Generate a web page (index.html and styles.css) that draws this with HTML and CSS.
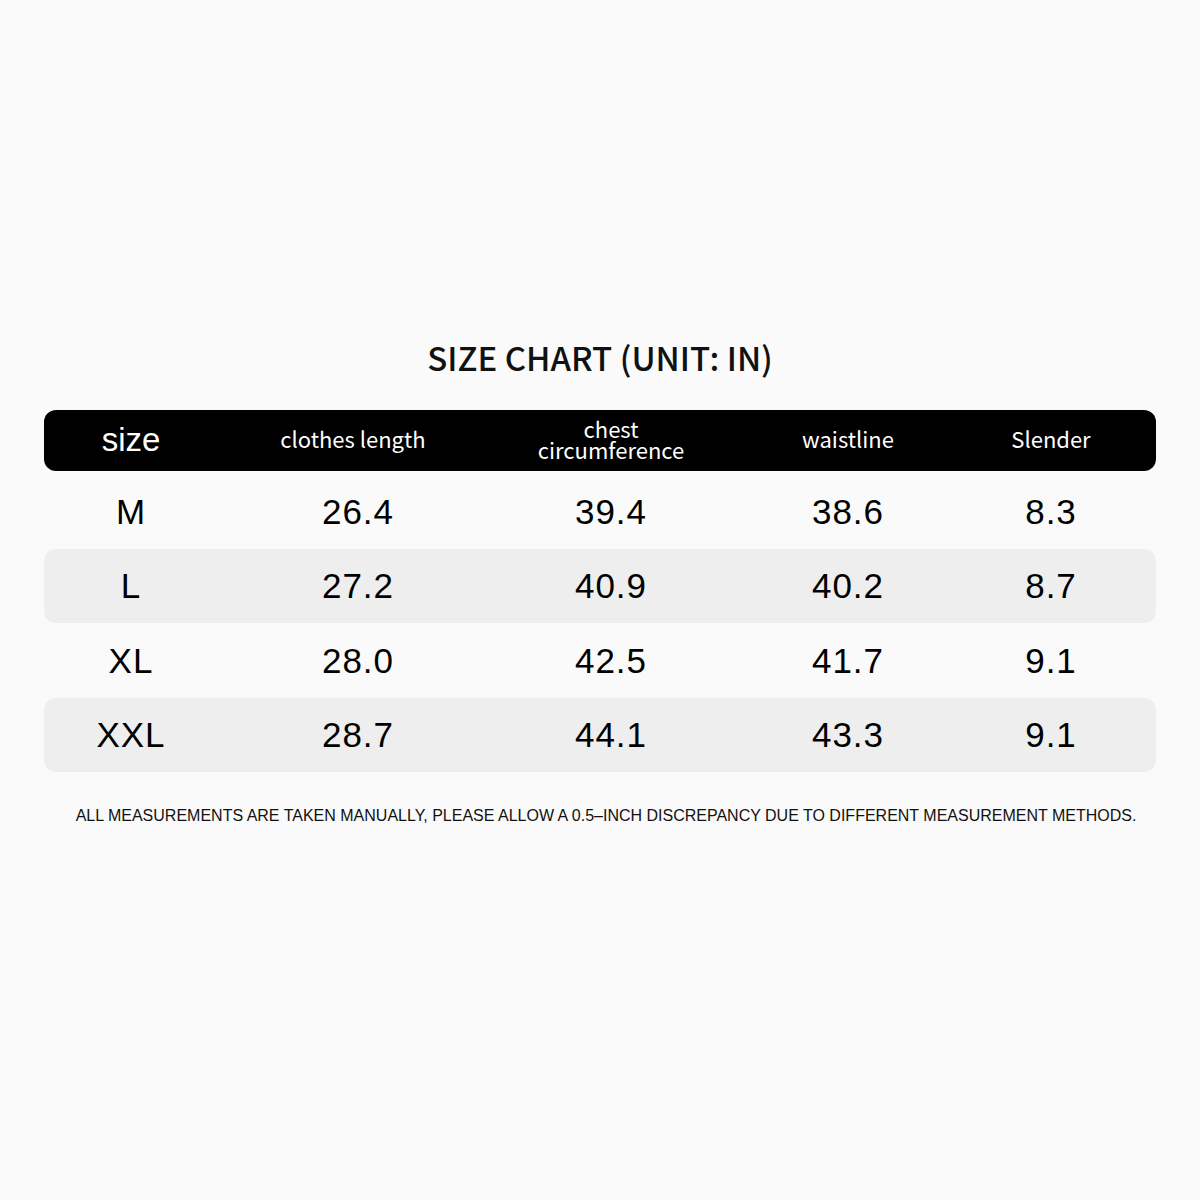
FILE: index.html
```html
<!DOCTYPE html>
<html>
<head>
<meta charset="utf-8">
<link rel="stylesheet" href="styles.css">
</head>
<body>
<main class="page">
  <h1 class="title">SIZE CHART (UNIT: IN)</h1>
  <div class="chart">
    <div class="row head">
      <div class="cell size-h">size</div>
      <div class="cell">clothes length</div>
      <div class="cell">chest<br>circumference</div>
      <div class="cell">waistline</div>
      <div class="cell">Slender</div>
    </div>
    <div class="row">
      <div class="cell">M</div><div class="cell v2">26.4</div><div class="cell">39.4</div><div class="cell">38.6</div><div class="cell">8.3</div>
    </div>
    <div class="row alt">
      <div class="cell">L</div><div class="cell v2">27.2</div><div class="cell">40.9</div><div class="cell">40.2</div><div class="cell">8.7</div>
    </div>
    <div class="row">
      <div class="cell">XL</div><div class="cell v2">28.0</div><div class="cell">42.5</div><div class="cell">41.7</div><div class="cell">9.1</div>
    </div>
    <div class="row alt">
      <div class="cell">XXL</div><div class="cell v2">28.7</div><div class="cell">44.1</div><div class="cell">43.3</div><div class="cell">9.1</div>
    </div>
  </div>
  <p class="note">ALL MEASUREMENTS ARE TAKEN MANUALLY, PLEASE ALLOW A 0.5–INCH DISCREPANCY DUE TO DIFFERENT MEASUREMENT METHODS.</p>
</main>
</body>
</html>
```

FILE: styles.css
```css
html, body {
  margin: 0;
  padding: 0;
  background: #fafafa;
}
.page {
  width: 1200px;
  height: 1200px;
  box-sizing: border-box;
  padding: 334px 44px 0;
  display: flex;
  flex-direction: column;
  align-items: stretch;
}
.title {
  margin: 0;
  height: 46px;
  line-height: 46px;
  text-align: center;
  font-family: "Noto Sans CJK SC", "Noto Sans", sans-serif;
  font-weight: 500;
  font-size: 33px;
  color: #111;
}
.chart {
  margin-top: 30px;
  display: flex;
  flex-direction: column;
}
.row {
  display: grid;
  grid-template-columns: 174px 270px 246px 228px 178px;
  padding-right: 16px;
  height: 75px;
  align-items: center;
  border-radius: 12px;
  font-family: "Liberation Sans", Arial, sans-serif;
  font-size: 35px;
  color: #000;
}
.row .cell {
  letter-spacing: 1px;
}
.row.alt {
  background: #eeeeee;
  height: 74px;
}
.row.head {
  background: #000;
  color: #fff;
  height: 61px;
  box-sizing: border-box;
  padding-bottom: 4px;
  margin-bottom: 3px;
  font-family: "Noto Sans CJK SC", "Noto Sans", sans-serif;
  font-weight: 400;
  font-size: 22px;
  line-height: 21px;
}
.row.head .cell {
  letter-spacing: 0;
}
.cell {
  text-align: center;
}
.v2 {
  padding-left: 10px;
}
.head .size-h {
  font-family: "Liberation Sans", Arial, sans-serif;
  font-weight: 400;
  font-size: 33px;
  line-height: 40px;
  padding-top: 2px;
}
.note {
  margin: 35px 0 0;
  padding-left: 12px;
  text-align: center;
  font-family: "Liberation Sans", Arial, sans-serif;
  font-size: 16px;
  color: #111;
  white-space: nowrap;
}
```
